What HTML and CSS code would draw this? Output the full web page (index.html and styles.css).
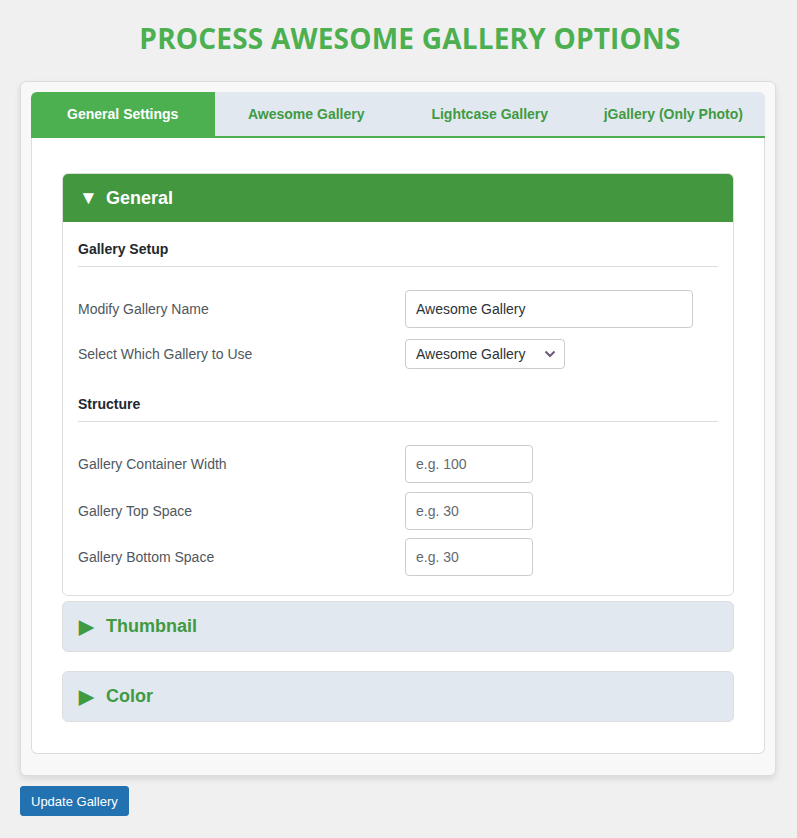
FILE: index.html
```html
<!DOCTYPE html>
<html lang="en">
  <head>
    <meta charset="utf-8" />
    <title>Process Awesome Gallery Options</title>
    <link rel="stylesheet" href="styles.css">
  </head>
  <body>
    <h1 class="page-title">PROCESS AWESOME GALLERY OPTIONS</h1>

    <div class="options-wrap">
      <div class="tabs">
        <div class="tab active">General Settings</div>
        <div class="tab">Awesome Gallery</div>
        <div class="tab">Lightcase Gallery</div>
        <div class="tab">jGallery (Only Photo)</div>
      </div>

      <div class="tab-panel">
        <div class="section open">
          <div class="section-head"><span class="arrow">&#9660;</span>General</div>
          <div class="section-body">
            <h3 class="group-title">Gallery Setup</h3>
            <div class="row">
              <label>Modify Gallery Name</label>
              <input type="text" class="wide" value="Awesome Gallery" />
            </div>
            <div class="row row-select">
              <label>Select Which Gallery to Use</label>
              <span class="select-box">
                <select>
                  <option>Awesome Gallery</option>
                  <option>Lightcase Gallery</option>
                  <option>jGallery</option>
                </select>
                <svg class="chevron" viewBox="0 0 12 8" width="12" height="8">
                  <path d="M1.5 1.5 L6 6 L10.5 1.5" fill="none" stroke="#6e5a78" stroke-width="2" />
                </svg>
              </span>
            </div>

            <h3 class="group-title second">Structure</h3>
            <div class="row">
              <label>Gallery Container Width</label>
              <input type="text" class="small" placeholder="e.g. 100" />
            </div>
            <div class="row">
              <label>Gallery Top Space</label>
              <input type="text" class="small" placeholder="e.g. 30" />
            </div>
            <div class="row">
              <label>Gallery Bottom Space</label>
              <input type="text" class="small" placeholder="e.g. 30" />
            </div>
          </div>
        </div>

        <div class="section closed first-closed">
          <div class="section-head"><span class="arrow">&#9654;</span>Thumbnail</div>
        </div>
        <div class="section closed">
          <div class="section-head"><span class="arrow">&#9654;</span>Color</div>
        </div>
      </div>
    </div>

    <button class="update-btn">Update Gallery</button>
  </body>
</html>
```

FILE: styles.css
```css
body {
  margin: 0;
  padding: 0 21px 0 20px;
  background-color: #f0f0f0;
  font-family: "Liberation Sans", Arial, sans-serif;
  color: #333;
}

.page-title {
  margin: 0;
  padding: 22px 0 27px 24px;
  text-align: center;
  font-family: "Open Sans", sans-serif;
  font-weight: 700;
  font-size: 28px;
  line-height: 32px;
  color: #4caf50;
  letter-spacing: 0.2px;
}

.options-wrap {
  background-color: #f8f8f8;
  border: 1px solid #dcdcdc;
  border-radius: 6px;
  padding: 10px 10px 21px;
  box-shadow: 0 3px 6px rgba(0, 0, 0, 0.1);
}

.tabs {
  display: flex;
  background-color: #e2e8f0;
  border-radius: 6px 6px 0 0;
  border-bottom: 2px solid #4caf50;
  overflow: hidden;
}

.tab {
  flex: 1;
  height: 44px;
  display: flex;
  align-items: center;
  justify-content: center;
  font-size: 14px;
  font-weight: 700;
  color: #3f9a42;
}

.tab.active {
  background-color: #4caf50;
  color: #fff;
}

.tab-panel {
  background-color: #fff;
  border: 1px solid #ddd;
  border-top: none;
  border-radius: 0 0 6px 6px;
  padding: 35px 30px 31px;
}

.section {
  border: 1px solid #ddd;
  border-radius: 6px;
  overflow: hidden;
}

.section-head {
  display: flex;
  align-items: center;
  height: 48px;
  padding-left: 16px;
  font-size: 18px;
  font-weight: 700;
}

.arrow {
  width: 27px;
  font-size: 19px;
}

.open .section-head {
  background-color: #43983f;
  color: #fff;
}

.closed {
  background-color: #e2e8f0;
  margin-top: 19px;
}

.closed .section-head {
  height: 49px;
  color: #3f9a42;
}

.first-closed {
  margin-top: 5px;
}

.section-body {
  padding: 17px 15px 19px;
}

.group-title {
  margin: 0 0 23px;
  padding-bottom: 7px;
  border-bottom: 1px solid #ddd;
  font-size: 14px;
  line-height: 20px;
  color: #23282d;
}

.group-title.second {
  margin-top: 25px;
}

.row {
  display: flex;
  align-items: center;
  margin-bottom: 8.5px;
}

.row.row-select {
  margin-top: 11px;
  margin-bottom: 0;
}

.row:last-child {
  margin-bottom: 0;
}

.row label {
  width: 327px;
  font-size: 14px;
  color: #50575e;
}

input[type="text"] {
  box-sizing: border-box;
  height: 38px;
  border: 1px solid #ccc;
  border-radius: 4px;
  padding: 0 10px;
  font-family: "Liberation Sans", Arial, sans-serif;
  font-size: 14px;
  color: #2c3338;
  background-color: #fff;
}

input::placeholder {
  color: #646970;
}

input.wide {
  width: 288px;
}

input.small {
  width: 128px;
}

.select-box {
  position: relative;
  display: inline-block;
}

select {
  appearance: none;
  box-sizing: border-box;
  width: 160px;
  height: 30px;
  border: 1px solid #ccc;
  border-radius: 4px;
  padding: 0 24px 0 10px;
  font-family: "Liberation Sans", Arial, sans-serif;
  font-size: 14px;
  color: #2c3338;
  background-color: #fff;
}

.chevron {
  position: absolute;
  right: 9px;
  top: 11px;
  pointer-events: none;
}

.update-btn {
  margin-top: 10px;
  height: 30px;
  padding: 0 10px;
  background-color: #2271b1;
  border: 1px solid #2271b1;
  border-radius: 3px;
  color: #fff;
  font-family: "Liberation Sans", Arial, sans-serif;
  font-size: 13px;
}
```
